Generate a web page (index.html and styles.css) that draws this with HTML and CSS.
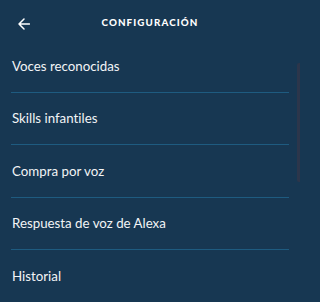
FILE: index.html
```html
<!DOCTYPE html>
<html lang="es">
<head>
<meta charset="utf-8">
<title>Configuración</title>
<link rel="stylesheet" href="styles.css">
</head>
<body>
<div class="screen">
  <header class="topbar">
    <button class="back" aria-label="Atrás">
      <svg width="12" height="12" viewBox="0 0 12 12"><path d="M11.5 6H1M6 1L1 6l5 5" fill="none" stroke="#fff" stroke-width="1.5" stroke-linecap="round" stroke-linejoin="round"/></svg>
    </button>
    <h1 class="title">CONFIGURACIÓN</h1>
  </header>
  <ul class="list">
    <li class="item">Voces reconocidas</li>
    <li class="item">Skills infantiles</li>
    <li class="item">Compra por voz</li>
    <li class="item">Respuesta de voz de Alexa</li>
    <li class="item">Historial</li>
  </ul>
  <div class="scrollbar"></div>
</div>
</body>
</html>
```
FILE: styles.css
```css
html, body {
  margin: 0;
  padding: 0;
  background: #173752;
}
.screen {
  position: relative;
  width: 300px;
  height: 302px;
  overflow: hidden;
  background: #173752;
  font-family: "Lato", "Open Sans", sans-serif;
  font-variant-ligatures: none;
  color: #f2f4f6;
}
.topbar {
  position: relative;
  display: flex;
  align-items: center;
  justify-content: center;
  height: 40px;
  padding-top: 4px;
  box-sizing: border-box;
}
.back {
  position: absolute;
  left: 17px;
  top: 17px;
  width: 14px;
  height: 14px;
  padding: 0;
  border: 0;
  background: none;
  display: flex;
  align-items: center;
  justify-content: center;
}
.title {
  margin: 0;
  font-size: 9.8px;
  font-weight: 900;
  letter-spacing: 1.1px;
  color: #ffffff;
}
.list {
  list-style: none;
  margin: 0;
  padding: 0 11px 0 11px;
}
.item {
  height: 51.5px;
  display: flex;
  align-items: center;
  padding-left: 1px;
  border-bottom: 1px solid #1e5b80;
  font-size: 13.3px;
}
.scrollbar {
  position: absolute;
  right: 0;
  top: 63px;
  width: 3px;
  height: 119px;
  background: #2c364b;
  border-radius: 2px 0 0 2px;
}
```
